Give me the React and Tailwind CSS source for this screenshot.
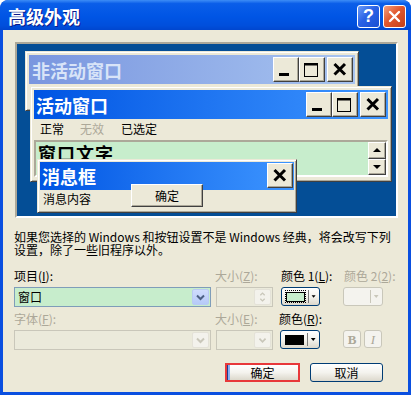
import React from 'react';

// Windows XP "高级外观" dialog

function CapGlyph({ type }) {
  if (type === 'min') {
    return (
      <svg width="24" height="23" viewBox="0 0 24 23">
        <rect x="5" y="15" width="10" height="3" fill="#000" />
      </svg>
    );
  }
  if (type === 'max') {
    return (
      <svg width="24" height="23" viewBox="0 0 24 23">
        <rect x="4.5" y="5.5" width="13" height="13" fill="none" stroke="#000" />
        <rect x="4" y="5" width="14" height="2.5" fill="#000" />
      </svg>
    );
  }
  return (
    <svg width="24" height="23" viewBox="0 0 24 23">
      <path d="M6.5 6 L17 16.5 M17 6 L6.5 16.5" stroke="#000" strokeWidth="3" />
    </svg>
  );
}

function CapBtn({ type, className = '' }) {
  return (
    <div
      className={`w-[26px] h-[25px] flex items-center justify-center bg-[#ECE9D8] border border-t-white border-l-white border-r-[#404040] border-b-[#404040] shadow-[inset_-1px_-1px_0_#ACA899] ${className}`}
    >
      <CapGlyph type={type} />
    </div>
  );
}

function Frame({ className = '', children }) {
  return (
    <div
      className={`absolute bg-[#ECE9D8] border border-t-[#ECE9D8] border-l-[#ECE9D8] border-r-[#404040] border-b-[#404040] shadow-[inset_1px_1px_0_#fff,inset_-1px_-1px_0_#ACA899] ${className}`}
    >
      {children}
    </div>
  );
}

function ScrollBtn({ up }) {
  return (
    <div className="flex-1 flex items-center justify-center bg-[#ECE9D8] border border-t-white border-l-white border-r-[#404040] border-b-[#404040] shadow-[inset_-1px_-1px_0_#ACA899]">
      <svg width="16" height="14" viewBox="0 0 16 14">
        {up ? <path d="M4 9 L8 5 L12 9 Z" fill="#000" /> : <path d="M4 5 L8 9 L12 5 Z" fill="#000" />}
      </svg>
    </div>
  );
}

function Preview() {
  return (
    <div className="relative ml-[1px] w-[383px] h-[176px] shrink-0 border-2 border-t-[#ACA899] border-l-[#ACA899] border-b-white border-r-white bg-[#044E96]">
      {/* inactive window */}
      <Frame className="left-[8px] top-[7px] w-[334px] h-[60px] p-[3px]">
        <div className="h-[29px] flex items-center pl-[3px] pr-[2px] bg-gradient-to-r from-[#7A96DF] to-[#A8C4F0]">
          <span className="text-[18px] font-bold text-[#D8E4F8] leading-none">非活动窗口</span>
          <div className="ml-auto flex">
            <CapBtn type="min" />
            <CapBtn type="max" />
            <CapBtn type="close" className="ml-[2px]" />
          </div>
        </div>
      </Frame>

      {/* active window */}
      <Frame className="left-[13px] top-[42px] w-[362px] h-[96px] p-[3px] flex flex-col">
        <div className="h-[29px] shrink-0 flex items-center pl-[2px] pr-[2px] bg-gradient-to-r from-[#0054E3] to-[#3D95FF]">
          <span className="text-[18px] font-bold text-white leading-none">活动窗口</span>
          <div className="ml-auto flex">
            <CapBtn type="min" />
            <CapBtn type="max" />
            <CapBtn type="close" className="ml-[2px]" />
          </div>
        </div>
        <div className="h-[20px] shrink-0 flex items-center pl-[6px] text-[12px] leading-none">
          <span className="w-[40px]">正常</span>
          <span className="w-[41px] text-[#ACA899]">无效</span>
          <span>已选定</span>
        </div>
        <div className="mt-[1px] h-[37px] shrink-0 flex border-2 border-t-[#ACA899] border-l-[#ACA899] border-b-white border-r-white bg-[#C7EDCC]">
          <span className="pl-[2px] pt-[2px] text-[18px] font-bold leading-none tracking-[1px]">窗口文字</span>
          <div className="ml-auto w-[18px] flex flex-col">
            <ScrollBtn up />
            <ScrollBtn />
          </div>
        </div>
      </Frame>

      {/* message box */}
      <Frame className="left-[20px] top-[115px] w-[260px] h-[54px] p-[2px]">
        <div className="h-[28px] flex items-start pl-[2px] pr-[1px] bg-gradient-to-r from-[#0054E3] to-[#3D95FF]">
          <span className="self-center text-[18px] font-bold text-white leading-none">消息框</span>
          <CapBtn type="close" className="ml-auto mt-[1px] h-[24px]" />
        </div>
        <div className="pl-[3px] pt-[3px] text-[12px] leading-none">消息内容</div>
        <div className="absolute left-[93px] top-[24px] w-[72px] h-[23px] flex items-center justify-center text-[12px] bg-[#ECE9D8] border border-t-white border-l-white border-r-[#404040] border-b-[#404040] shadow-[inset_-1px_-1px_0_#ACA899]">
          确定
        </div>
      </Frame>
    </div>
  );
}

function Chevron({ color }) {
  return (
    <svg width="15" height="16" viewBox="0 0 15 16">
      <path d="M4 6.5 L7.5 10 L11 6.5" fill="none" stroke={color} strokeWidth="2" />
    </svg>
  );
}

function Combo({ disabled, children }) {
  return (
    <div
      className={`w-[197px] h-[20px] border flex items-center p-px ${
        disabled ? 'border-[#C9C7BA] bg-[#EBEADB]' : 'border-[#7F9DB9] bg-[#C7EDCC]'
      }`}
    >
      <span className="pl-[2px] text-[12px] leading-none">{children}</span>
      <div
        className={`ml-auto w-[17px] h-full rounded-[2px] flex items-center justify-center border ${
          disabled ? 'bg-[#F3F2EC] border-[#E4E2D8]' : 'bg-gradient-to-b from-[#CFDCFD] to-[#B6CAF8] border-[#B9CBF3]'
        }`}
      >
        <Chevron color={disabled ? '#C9C7BA' : '#4D6185'} />
      </div>
    </div>
  );
}

function SizeBox({ spin }) {
  return (
    <div className="ml-[1px] w-[57px] h-[20px] border border-[#C9C7BA] bg-[#EBEADB] flex p-px">
      <div className="ml-auto w-[17px] h-full flex flex-col rounded-[2px] border border-[#E4E2D8] bg-[#F3F2EC] items-center justify-center">
        {spin ? (
          <svg width="15" height="16" viewBox="0 0 15 16">
            <path d="M5 6 L7.5 3.5 L10 6" fill="none" stroke="#C9C7BA" strokeWidth="1.5" />
            <path d="M5 10 L7.5 12.5 L10 10" fill="none" stroke="#C9C7BA" strokeWidth="1.5" />
          </svg>
        ) : (
          <Chevron color="#C9C7BA" />
        )}
      </div>
    </div>
  );
}

function ColorBtn({ swatch, focus, disabled, className = '' }) {
  return (
    <div
      className={`h-[19px] rounded-[3px] border flex items-center pl-[3px] pr-[2px] ${
        disabled
          ? 'border-[#C9C7BA] bg-[#F4F3EE]'
          : 'border-[#003C74] bg-gradient-to-b from-white via-[#F4F3EE] to-[#DCD8CC]'
      } ${className}`}
    >
      <div className={`w-[22px] h-[13px] flex items-center justify-center ${focus ? 'border border-dotted border-black' : ''}`}>
        {swatch && <div className={`w-[19px] h-[10px] border border-black ${swatch}`} />}
      </div>
      <div className={`ml-[2px] w-px h-[13px] ${disabled ? 'bg-[#C9C7BA]' : 'bg-[#7A7A7A]'}`} />
      <svg width="9" height="13" viewBox="0 0 9 13" className="ml-[1px]">
        <path d="M2 5 L7 5 L4.5 8 Z" fill={disabled ? '#C9C7BA' : '#000'} />
      </svg>
    </div>
  );
}

function App() {
  return (
    <div className="w-[411px] h-[395px] rounded-t-[8px] bg-[#0A4FE0] flex flex-col overflow-hidden font-['Noto_Sans_CJK_SC','Noto_Sans',sans-serif] text-black">
      <div className="h-[30px] shrink-0 flex items-center pl-[8px] pr-[5px] pt-[2px] rounded-t-[8px] bg-[linear-gradient(to_bottom,#3D8DF6_0%,#0A5EE9_12%,#0055E5_55%,#004FDC_85%,#0046CF_100%)]">
        <span className="text-white font-bold text-[18px] leading-none [text-shadow:1px_1px_0_#0A1A8A]">高级外观</span>
        <div className="ml-auto flex gap-[3px]">
          <div className="w-[23px] h-[23px] rounded-[3px] border border-white flex items-center justify-center bg-[linear-gradient(135deg,#6C9CF7_0%,#2A62E6_45%,#1A4ED2_100%)]">
            <span className="text-white font-bold text-[18px] leading-none font-['Liberation_Sans',sans-serif]">?</span>
          </div>
          <div className="w-[23px] h-[23px] rounded-[3px] border border-white flex items-center justify-center bg-[linear-gradient(135deg,#F3A080_0%,#E2582E_45%,#C43F18_100%)]">
            <svg width="15" height="15" viewBox="0 0 15 15">
              <path d="M3 3 L12 12 M12 3 L3 12" stroke="#fff" strokeWidth="2.4" strokeLinecap="round" />
            </svg>
          </div>
        </div>
      </div>

      <div className="flex-1 mx-[3px] mb-[3px] bg-[#ECE9D8] flex flex-col pl-[11px] pr-[10px] pt-[12px] overflow-hidden text-[12px]">
        <Preview />

        <div className="mt-[12px] whitespace-nowrap text-[12px] leading-[13px]">
          <div>如果您选择的 Windows 和按钮设置不是 Windows 经典，将会改写下列</div>
          <div>设置，除了一些旧程序以外。</div>
        </div>

        <div className="mt-[12px] h-[16px] flex items-center whitespace-nowrap leading-none">
          <span className="w-[201px]">
            项目(<span className="underline">I</span>):
          </span>
          <span className="w-[66px] text-[#ACA899]">
            大小(<span className="underline">Z</span>):
          </span>
          <span className="w-[63px]">
            颜色 1(<span className="underline">L</span>):
          </span>
          <span className="text-[#ACA899]">
            颜色 2(<span className="underline">2</span>):
          </span>
        </div>
        <div className="mt-[3px] flex items-start">
          <div className="w-[201px]">
            <Combo>窗口</Combo>
          </div>
          <div className="w-[66px]">
            <SizeBox spin />
          </div>
          <div className="w-[62px]">
            <ColorBtn swatch="bg-[#C7EDCC]" focus className="w-[39px]" />
          </div>
          <ColorBtn disabled className="w-[40px]" />
        </div>

        <div className="mt-[4px] h-[16px] flex items-center whitespace-nowrap leading-none">
          <span className="w-[201px] text-[#ACA899]">
            字体(<span className="underline">F</span>):
          </span>
          <span className="w-[64px] text-[#ACA899]">
            大小(<span className="underline">E</span>):
          </span>
          <span>
            颜色(<span className="underline">R</span>):
          </span>
        </div>
        <div className="mt-[3px] flex items-start">
          <div className="w-[201px]">
            <Combo disabled />
          </div>
          <div className="w-[65px]">
            <SizeBox />
          </div>
          <div className="w-[63px]">
            <ColorBtn swatch="bg-black" className="w-[40px]" />
          </div>
          <div className="flex gap-[3px]">
            <div className="w-[18px] h-[18px] rounded-[3px] border border-[#C9C7BA] bg-[#F4F3EE] flex items-center justify-center font-['Liberation_Serif',serif] font-bold text-[13px] text-[#ACA899] leading-none">
              B
            </div>
            <div className="w-[18px] h-[18px] rounded-[3px] border border-[#C9C7BA] bg-[#F4F3EE] flex items-center justify-center font-['Liberation_Serif',serif] italic text-[13px] text-[#ACA899] leading-none">
              I
            </div>
          </div>
        </div>

        <div className="mt-[13px] flex gap-[10px] pl-[211px]">
          <div className="w-[75px] h-[19px] border-2 border-[#E8383A] flex">
            <div className="flex-1 flex items-center justify-center bg-gradient-to-b from-white via-[#F4F3EE] to-[#DCD8CC] shadow-[inset_1px_0_0_#1C3E90,inset_3px_0_0_#8AAEF0] leading-none">
              确定
            </div>
          </div>
          <div className="w-[73px] h-[19px] rounded-[3px] border border-[#003C74] flex items-center justify-center bg-gradient-to-b from-white via-[#F4F3EE] to-[#DCD8CC] leading-none">
            取消
          </div>
        </div>
      </div>
    </div>
  );
}

export default App;
